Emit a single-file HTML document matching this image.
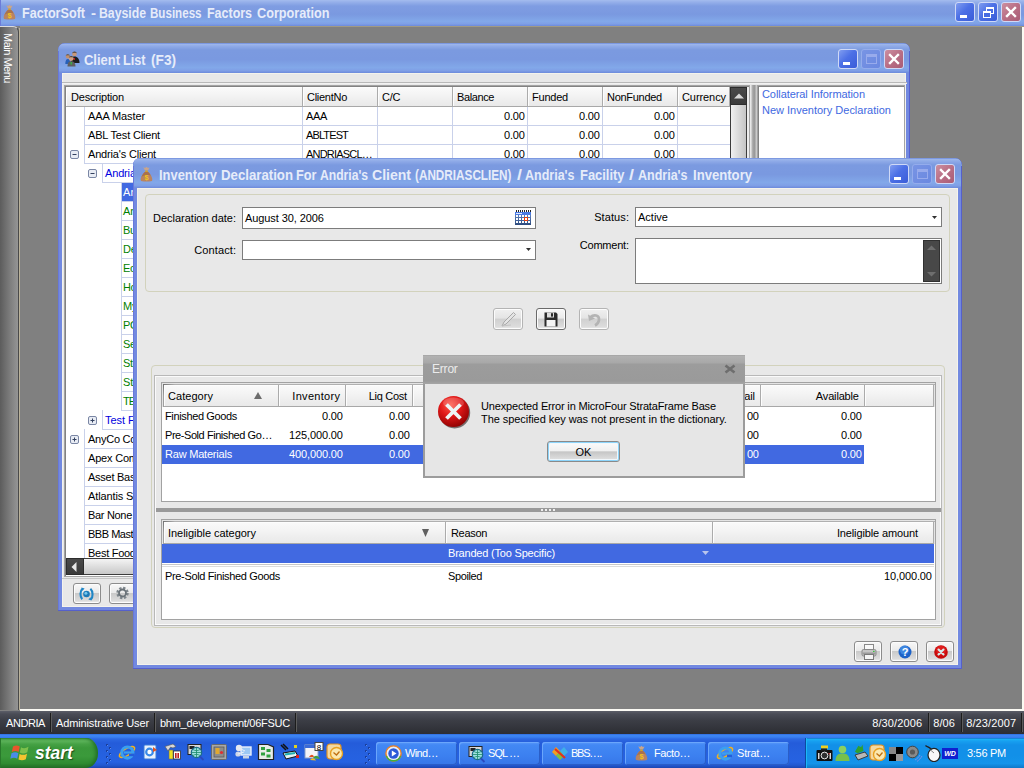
<!DOCTYPE html>
<html><head><meta charset="utf-8"><title>FactorSoft</title>
<style>
*{box-sizing:border-box;margin:0;padding:0}
html,body{width:1024px;height:768px;overflow:hidden;background:#808080;font-family:"Liberation Sans",sans-serif;font-size:11px;color:#000}
.a{position:absolute}
.t{position:absolute;white-space:nowrap;line-height:13px;height:13px;transform-origin:0 0}
.r{text-align:right}
.cap{background:linear-gradient(#5b7ad6 0,#9fb8ec 1px,#90abe8 3px,#7b9ae0 7px,#7a99e0 55%,#82a8e9 82%,#7f9fe6 92%,#6c8adb 100%)}
.capt{position:absolute;white-space:nowrap;font-weight:bold;font-size:14px;line-height:16px;color:#e6ecfa;transform-origin:0 0}
.win{position:absolute;border-radius:7px 7px 0 0;overflow:hidden}
.cb{position:absolute;width:20px;height:20px;border-radius:3px;border:1px solid #cfd9f7}
.cb.min,.cb.max{background:linear-gradient(135deg,#809df0 0,#4c70e6 45%,#3a5cd8 100%)}
.cb.dis{background:linear-gradient(135deg,#7894e4,#6a88e0);border-color:#94acec}
.cb.cls{background:linear-gradient(135deg,#cc8fa0 0,#b96f86 50%,#a95c76 100%)}
.hdr{position:absolute;background:linear-gradient(#fafafa 0,#f4f4f4 40%,#eeeeee 70%,#e9e9e9 100%);border-right:1px solid #ababab;border-bottom:1px solid #a8a8a8;box-shadow:inset 1px 1px 0 #fdfdfd}
.btn{position:absolute;border:1px solid #8c8c8c;border-radius:3px;background:linear-gradient(#f8f8f8 0,#eaeaea 46%,#cacaca 50%,#dcdcdc 88%,#f0f0f0 100%);box-shadow:inset 0 0 0 1px #fcfcfc}
.inp{position:absolute;background:#fff;border:1px solid #7c7c7c}
.gl{position:absolute;background:#c9d1ea}
.w{color:#fff}
</style></head><body>
<div class="a" style="left:0px;top:0px;width:1024px;height:26px;background:linear-gradient(#a4bcee 0,#96b0ea 2px,#7f9de2 6px,#7a99e0 55%,#82a8e9 82%,#7f9fe6 92%,#6c8adb 100%);box-shadow:inset 1px 0 0 #6c7cd8"></div>
<svg class="a" style="left:3px;top:4px" width="13" height="16" viewBox="0 0 14 16" preserveAspectRatio="none"><path d="M3.5 1.2L5.5 2L7 0.8L8.5 2L10.3 1.4L8.6 4.6L5.4 4.6Z" fill="#c9a58c"/><rect x="5.6" y="4.5" width="2.8" height="1.6" fill="#d8a020"/><path d="M5.2 6C2.5 8 0.3 12 0.8 14.2C1 15.3 3 15.6 7 15.6C11 15.6 13 15.3 13.2 14.2C13.7 12 11.5 8 8.8 6Z" fill="#b98462"/><path d="M5.2 6C3.8 7 2.4 9 1.6 11C4 9 9 8.5 11.5 9.5C10.8 8 9.8 6.8 8.8 6Z" fill="#a8714f"/><text x="7" y="14" font-size="8" font-weight="bold" text-anchor="middle" fill="#f2c21a" font-family="Liberation Sans">$</text></svg>
<div class="capt" style="left:22px;top:5px;transform:scaleX(0.9004)">FactorSoft</div><div class="capt" style="left:90.5px;top:5px;transform:scaleX(1.0738)">-</div><div class="capt" style="left:99px;top:5px;transform:scaleX(0.8757)">Bayside</div><div class="capt" style="left:150px;top:5px;transform:scaleX(0.8277)">Business</div><div class="capt" style="left:207px;top:5px;transform:scaleX(0.8903)">Factors</div><div class="capt" style="left:257px;top:5px;transform:scaleX(0.9054)">Corporation</div>
<div class="cb min" style="left:955px;top:2px;width:20px;height:20px;"><svg class="a" style="left:0;top:0" width="19" height="19"><rect x="4" y="12" width="7" height="3" fill="#fff"/></svg></div>
<div class="cb max" style="left:978px;top:2px;width:20px;height:20px;"><svg class="a" style="left:0;top:0" width="19" height="19"><rect x="7.5" y="4.5" width="7" height="6" fill="none" stroke="#fff" stroke-width="1"/><rect x="7" y="4" width="8" height="2" fill="#fff"/><rect x="4.5" y="8.5" width="7" height="6" fill="#456ae2" stroke="#fff" stroke-width="1"/><rect x="4" y="8" width="8" height="2" fill="#fff"/></svg></div>
<div class="cb cls" style="left:1001px;top:2px;width:20px;height:20px;"><svg class="a" style="left:0;top:0" width="19" height="19"><path d="M5 5L13 13M13 5L5 13" stroke="#fff" stroke-width="2.400" stroke-linecap="square"/></svg></div>
<div class="a" style="left:0px;top:26px;width:19px;height:684px;background:linear-gradient(90deg,#5c5c5c 0,#7a7a7a 50%,#959595 100%);border-top:1px solid #dcdcdc;border-right:1px solid #4a4a4a;border-radius:0 6px 0 0"></div>
<div class="a" style="left:19px;top:28px;width:1px;height:682px;background:#bab29a"></div>
<div class="a" style="left:20px;top:26px;width:1004px;height:1px;background:#a09a84"></div>
<div class="a" style="left:1022px;top:27px;width:2px;height:683px;background:#fbfaf2"></div>
<div class="a" style="left:20px;top:709px;width:1004px;height:2px;background:#fbfaf4"></div>
<div class="t w" id="mm" style="left:14px;top:33px;transform:rotate(90deg);font-size:11px;letter-spacing:-0.5px">Main Menu</div>
<div class="win" style="left:58px;top:43px;width:852px;height:568px;background:#7289e0;box-shadow:inset -1px -1px 0 #5560cc,inset 1px 0 0 #6878da">
<div class="a cap" style="left:0;top:0;width:852px;height:30px;border-radius:7px 7px 0 0"></div>
<div class="a" style="left:0;top:8px;width:1px;height:22px;background:#6878da"></div>
<div class="a" style="left:851px;top:8px;width:1px;height:22px;background:#5560cc"></div>
<svg class="a" style="left:7px;top:8px" width="15" height="16" viewBox="0 0 15 16"><circle cx="9.5" cy="3" r="2.3" fill="#c89878"/><path d="M7.200 2.800A2.300 2.300 0 0 1 11.800 2.800L11 1.800L8 1.800Z" fill="#4a4038"/><path d="M6 11C6 7 7.5 5.5 9.5 5.5C12.5 5.5 14.5 8 14.5 12L6 12Z" fill="#1c1c1c"/><rect x="8.6" y="7" width="1.2" height="2" fill="#e02020"/><circle cx="2.8" cy="5.5" r="2.1" fill="#c09070"/><path d="M0.700 5.300A2.100 2.100 0 0 1 4.900 5.300L4.200 4.300L1.400 4.300Z" fill="#50483c"/><path d="M0.3 13C0.3 9.5 1.3 8 2.8 8C4.5 8 5.5 9.5 5.5 13Z" fill="#2860b8"/><circle cx="6.2" cy="7.5" r="2.4" fill="#d0a080"/><path d="M3.800 7.300A2.400 2.400 0 0 1 8.600 7.300L7.800 6.200L4.600 6.200Z" fill="#504438"/><path d="M2.5 15.5C2.5 11.5 4 10.2 6.2 10.2C8.8 10.2 10.5 11.8 10.5 15.5Z" fill="#606060"/><rect x="5.6" y="11" width="1.2" height="2.6" fill="#30c040"/></svg>
<div class="capt" style="left:25.5px;top:9px;transform:scaleX(0.9260)">Client</div><div class="capt" style="left:65px;top:9px;transform:scaleX(0.9045)">List</div><div class="capt" style="left:92.5px;top:9px;transform:scaleX(0.9750)">(F3)</div>
<div class="cb min" style="left:780px;top:6px"><svg class="a" style="left:0;top:0" width="19" height="19"><rect x="4" y="12" width="7" height="3" fill="#fff"/></svg></div>
<div class="cb dis" style="left:803px;top:6px"><svg class="a" style="left:0;top:0" width="19" height="19"><rect x="4.5" y="4.5" width="10" height="9" fill="none" stroke="#98abec" stroke-width="1"/><rect x="4" y="4" width="11" height="3" fill="#98abec"/></svg></div>
<div class="cb cls" style="left:826px;top:6px"><svg class="a" style="left:0;top:0" width="19" height="19"><path d="M5 5L13 13M13 5L5 13" stroke="#fff" stroke-width="2.400" stroke-linecap="square"/></svg></div>
<div class="a" style="left:4px;top:30px;width:844px;height:534px;background:#e8e8e8;box-shadow:inset 1px 1px 0 #f4f3ec,inset -1px -1px 0 #f4f3ec"></div>
</div>
<div class="a" style="left:62px;top:82px;width:845px;height:1px;background:#b8b8b8"></div>
<div class="a" style="left:62px;top:83px;width:845px;height:1px;background:#f2f2f2"></div>
<div class="a" style="left:64px;top:85px;width:686px;height:492px;background:#fff;border:1px solid #a4a4a4;box-shadow:inset 1px 1px 0 #828282"></div>
<div class="hdr" style="left:66px;top:87px;width:237px;height:20px;"></div>
<div class="t " style="left:71px;top:91px;;letter-spacing:-0.185px">Description</div>
<div class="hdr" style="left:303px;top:87px;width:75px;height:20px;"></div>
<div class="t " style="left:307px;top:91px;;letter-spacing:-0.273px">ClientNo</div>
<div class="hdr" style="left:378px;top:87px;width:75px;height:20px;"></div>
<div class="t " style="left:382px;top:91px;;letter-spacing:-0.312px">C/C</div>
<div class="hdr" style="left:453px;top:87px;width:75px;height:20px;"></div>
<div class="t " style="left:457px;top:91px;;letter-spacing:-0.397px">Balance</div>
<div class="hdr" style="left:528px;top:87px;width:75px;height:20px;"></div>
<div class="t " style="left:532px;top:91px;;letter-spacing:-0.224px">Funded</div>
<div class="hdr" style="left:603px;top:87px;width:75px;height:20px;"></div>
<div class="t " style="left:607px;top:91px;;letter-spacing:-0.281px">NonFunded</div>
<div class="hdr" style="left:678px;top:87px;width:52px;height:20px;"></div>
<div class="t " style="left:682px;top:91px;;letter-spacing:-0.078px">Currency</div>
<div class="gl" style="left:84px;top:107px;width:1px;height:19px;"></div>
<div class="gl" style="left:84px;top:125px;width:646px;height:1px;"></div>
<div class="t " style="left:88px;top:110px;color:#000;letter-spacing:-0.111px">AAA Master</div>
<div class="t " style="left:306px;top:110px;;letter-spacing:-0.344px">AAA</div>
<div class="t  r" style="left:324.891px;width:200px;top:110px;;letter-spacing:-0.109px">0.00</div>
<div class="t  r" style="left:399.891px;width:200px;top:110px;;letter-spacing:-0.109px">0.00</div>
<div class="t  r" style="left:474.891px;width:200px;top:110px;;letter-spacing:-0.109px">0.00</div>
<div class="gl" style="left:302px;top:107px;width:1px;height:19px;"></div>
<div class="gl" style="left:377px;top:107px;width:1px;height:19px;"></div>
<div class="gl" style="left:452px;top:107px;width:1px;height:19px;"></div>
<div class="gl" style="left:527px;top:107px;width:1px;height:19px;"></div>
<div class="gl" style="left:602px;top:107px;width:1px;height:19px;"></div>
<div class="gl" style="left:677px;top:107px;width:1px;height:19px;"></div>
<div class="gl" style="left:84px;top:125px;width:1px;height:20px;"></div>
<div class="gl" style="left:84px;top:144px;width:646px;height:1px;"></div>
<div class="t " style="left:88px;top:129px;color:#000;letter-spacing:-0.176px">ABL Test Client</div>
<div class="t " style="left:306px;top:129px;;letter-spacing:-0.875px">ABLTEST</div>
<div class="t  r" style="left:324.891px;width:200px;top:129px;;letter-spacing:-0.109px">0.00</div>
<div class="t  r" style="left:399.891px;width:200px;top:129px;;letter-spacing:-0.109px">0.00</div>
<div class="t  r" style="left:474.891px;width:200px;top:129px;;letter-spacing:-0.109px">0.00</div>
<div class="gl" style="left:302px;top:126px;width:1px;height:19px;"></div>
<div class="gl" style="left:377px;top:126px;width:1px;height:19px;"></div>
<div class="gl" style="left:452px;top:126px;width:1px;height:19px;"></div>
<div class="gl" style="left:527px;top:126px;width:1px;height:19px;"></div>
<div class="gl" style="left:602px;top:126px;width:1px;height:19px;"></div>
<div class="gl" style="left:677px;top:126px;width:1px;height:19px;"></div>
<div class="gl" style="left:84px;top:144px;width:1px;height:20px;"></div>
<div class="gl" style="left:84px;top:163px;width:646px;height:1px;"></div>
<div class="t " style="left:88px;top:148px;color:#000;letter-spacing:-0.173px">Andria's Client</div>
<svg class="a" style="left:70px;top:150px" width="9" height="9"><rect x="0.5" y="0.5" width="8" height="8" rx="1.5" fill="#e8ecf4" stroke="#7a86a4"/><path d="M2.5 4.5H6.5" stroke="#33415f" stroke-width="1"/></svg>
<div class="t " style="left:306px;top:148px;;letter-spacing:-0.797px">ANDRIASCL…</div>
<div class="t  r" style="left:324.891px;width:200px;top:148px;;letter-spacing:-0.109px">0.00</div>
<div class="t  r" style="left:399.891px;width:200px;top:148px;;letter-spacing:-0.109px">0.00</div>
<div class="t  r" style="left:474.891px;width:200px;top:148px;;letter-spacing:-0.109px">0.00</div>
<div class="gl" style="left:302px;top:145px;width:1px;height:19px;"></div>
<div class="gl" style="left:377px;top:145px;width:1px;height:19px;"></div>
<div class="gl" style="left:452px;top:145px;width:1px;height:19px;"></div>
<div class="gl" style="left:527px;top:145px;width:1px;height:19px;"></div>
<div class="gl" style="left:602px;top:145px;width:1px;height:19px;"></div>
<div class="gl" style="left:677px;top:145px;width:1px;height:19px;"></div>
<div class="gl" style="left:102px;top:163px;width:1px;height:20px;"></div>
<div class="gl" style="left:102px;top:182px;width:628px;height:1px;"></div>
<div class="t " style="left:105px;top:167px;color:#0000e0;letter-spacing:-0.158px">Andria's Facility</div>
<svg class="a" style="left:88px;top:169px" width="9" height="9"><rect x="0.5" y="0.5" width="8" height="8" rx="1.5" fill="#e8ecf4" stroke="#7a86a4"/><path d="M2.5 4.5H6.5" stroke="#33415f" stroke-width="1"/></svg>
<div class="gl" style="left:121px;top:182px;width:1px;height:20px;"></div>
<div class="gl" style="left:121px;top:201px;width:609px;height:1px;"></div>
<div class="a" style="left:122px;top:183px;width:160px;height:18px;background:#4169e1"></div>
<div class="t " style="left:123px;top:186px;color:#fff;letter-spacing:0.069px">Andria's Inventory</div>
<div class="gl" style="left:121px;top:201px;width:1px;height:20px;"></div>
<div class="gl" style="left:121px;top:220px;width:609px;height:1px;"></div>
<div class="t " style="left:123px;top:205px;color:#008000;letter-spacing:-0.195px">Andria's AR</div>
<div class="gl" style="left:121px;top:220px;width:1px;height:20px;"></div>
<div class="gl" style="left:121px;top:239px;width:609px;height:1px;"></div>
<div class="t " style="left:123px;top:224px;color:#008000;letter-spacing:-0.395px">Building</div>
<div class="gl" style="left:121px;top:239px;width:1px;height:20px;"></div>
<div class="gl" style="left:121px;top:258px;width:609px;height:1px;"></div>
<div class="t " style="left:123px;top:243px;color:#008000;letter-spacing:-0.075px">Delivery trucks</div>
<div class="gl" style="left:121px;top:258px;width:1px;height:20px;"></div>
<div class="gl" style="left:121px;top:277px;width:609px;height:1px;"></div>
<div class="t " style="left:123px;top:262px;color:#008000;letter-spacing:-0.333px">Ecuipment</div>
<div class="gl" style="left:121px;top:277px;width:1px;height:20px;"></div>
<div class="gl" style="left:121px;top:296px;width:609px;height:1px;"></div>
<div class="t " style="left:123px;top:281px;color:#008000;letter-spacing:-0.362px">House</div>
<div class="gl" style="left:121px;top:296px;width:1px;height:20px;"></div>
<div class="gl" style="left:121px;top:315px;width:609px;height:1px;"></div>
<div class="t " style="left:123px;top:300px;color:#008000;letter-spacing:-0.041px">My stuff</div>
<div class="gl" style="left:121px;top:315px;width:1px;height:20px;"></div>
<div class="gl" style="left:121px;top:334px;width:609px;height:1px;"></div>
<div class="t " style="left:123px;top:319px;color:#008000;letter-spacing:-0.231px">PO collateral</div>
<div class="gl" style="left:121px;top:334px;width:1px;height:20px;"></div>
<div class="gl" style="left:121px;top:353px;width:609px;height:1px;"></div>
<div class="t " style="left:123px;top:338px;color:#008000;letter-spacing:-0.231px">Securities</div>
<div class="gl" style="left:121px;top:353px;width:1px;height:20px;"></div>
<div class="gl" style="left:121px;top:372px;width:609px;height:1px;"></div>
<div class="t " style="left:123px;top:357px;color:#008000;letter-spacing:-0.306px">Stock</div>
<div class="gl" style="left:121px;top:372px;width:1px;height:20px;"></div>
<div class="gl" style="left:121px;top:391px;width:609px;height:1px;"></div>
<div class="t " style="left:123px;top:376px;color:#008000;letter-spacing:-0.091px">Stuff</div>
<div class="gl" style="left:121px;top:391px;width:1px;height:20px;"></div>
<div class="gl" style="left:121px;top:410px;width:609px;height:1px;"></div>
<div class="t " style="left:123px;top:395px;color:#008000;letter-spacing:-1.031px">TEST</div>
<div class="gl" style="left:102px;top:410px;width:1px;height:20px;"></div>
<div class="gl" style="left:102px;top:429px;width:628px;height:1px;"></div>
<div class="t " style="left:105px;top:414px;color:#0000e0;letter-spacing:-0.036px">Test Facility</div>
<svg class="a" style="left:88px;top:416px" width="9" height="9"><rect x="0.5" y="0.5" width="8" height="8" rx="1.5" fill="#e8ecf4" stroke="#7a86a4"/><path d="M2.5 4.5H6.5M4.5 2.5V6.5" stroke="#33415f" stroke-width="1"/></svg>
<div class="gl" style="left:84px;top:429px;width:1px;height:20px;"></div>
<div class="gl" style="left:84px;top:448px;width:646px;height:1px;"></div>
<div class="t " style="left:88px;top:433px;color:#000;letter-spacing:-0.245px">AnyCo Company</div>
<svg class="a" style="left:70px;top:435px" width="9" height="9"><rect x="0.5" y="0.5" width="8" height="8" rx="1.5" fill="#e8ecf4" stroke="#7a86a4"/><path d="M2.5 4.5H6.5M4.5 2.5V6.5" stroke="#33415f" stroke-width="1"/></svg>
<div class="gl" style="left:84px;top:448px;width:1px;height:20px;"></div>
<div class="gl" style="left:84px;top:467px;width:646px;height:1px;"></div>
<div class="t " style="left:88px;top:452px;color:#000;letter-spacing:-0.188px">Apex Company</div>
<div class="gl" style="left:84px;top:467px;width:1px;height:20px;"></div>
<div class="gl" style="left:84px;top:486px;width:646px;height:1px;"></div>
<div class="t " style="left:88px;top:471px;color:#000;letter-spacing:-0.256px">Asset Based</div>
<div class="gl" style="left:84px;top:486px;width:1px;height:20px;"></div>
<div class="gl" style="left:84px;top:505px;width:646px;height:1px;"></div>
<div class="t " style="left:88px;top:490px;color:#000;letter-spacing:-0.121px">Atlantis Supply</div>
<div class="gl" style="left:84px;top:505px;width:1px;height:20px;"></div>
<div class="gl" style="left:84px;top:524px;width:646px;height:1px;"></div>
<div class="t " style="left:88px;top:509px;color:#000;letter-spacing:-0.312px">Bar None</div>
<div class="gl" style="left:84px;top:524px;width:1px;height:20px;"></div>
<div class="gl" style="left:84px;top:543px;width:646px;height:1px;"></div>
<div class="t " style="left:88px;top:528px;color:#000;letter-spacing:-0.472px">BBB Master</div>
<div class="gl" style="left:84px;top:543px;width:1px;height:20px;"></div>
<div class="t " style="left:88px;top:547px;color:#000;letter-spacing:-0.269px">Best Foods</div>
<div class="a" style="left:747px;top:87px;width:2px;height:489px;background:#ececec"></div>
<div class="a" style="left:730px;top:87px;width:17px;height:471px;background:linear-gradient(90deg,#f0f0f0 0,#dcdcdc 45%,#c4c4c4 100%);border:1px solid #3c3c3c"></div>
<div class="a" style="left:730px;top:87px;width:17px;height:18px;background:linear-gradient(#4a4a4a,#3a3a3a);border:1px solid #2c2c2c"><svg class="a" style="left:2.500px;top:5px" width="10" height="6"><path d="M0 5.5L5 0.5L10 5.5Z" fill="#d8d8d8"/></svg></div>
<div class="a" style="left:66px;top:558px;width:664px;height:17px;background:linear-gradient(#f4f4f4 0,#e0e0e0 45%,#c8c8c8 100%);border:1px solid #3c3c3c"></div>
<div class="a" style="left:66px;top:558px;width:18px;height:17px;background:linear-gradient(#4a4a4a,#3a3a3a);border:1px solid #2c2c2c"><svg class="a" style="left:3.500px;top:3px" width="6" height="10"><path d="M5.500 0L0.500 5L5.500 10Z" fill="#e8e8e8"/></svg></div>
<div class="a" style="left:730px;top:558px;width:19px;height:18px;background:#e8e8e8"></div>
<div class="a" style="left:751px;top:85px;width:6px;height:492px;background:linear-gradient(90deg,#e0e0e0 0,#a4a4a4 30%,#9a9a9a 60%,#d8d8d8 100%)"></div>
<div class="a" style="left:757px;top:85px;width:148px;height:492px;background:#fff;border:1px solid #a4a4a4;box-shadow:inset 1px 1px 0 #828282"></div>
<div class="t " style="left:762px;top:88px;color:#4169e1;letter-spacing:-0.072px">Collateral Information</div>
<div class="t " style="left:762px;top:104px;color:#4169e1;letter-spacing:-0.003px">New Inventory Declaration</div>
<div class="a" style="left:62px;top:578px;width:845px;height:1px;background:#c6c6c6"></div>
<div class="btn" style="left:73px;top:583px;width:28px;height:21px;"><svg class="a" style="left:4px;top:1.500px" width="17" height="16" viewBox="0 0 17 16"><circle cx="8.500" cy="8" r="3.300" fill="#1b7ab8"/><circle cx="7.900" cy="7.300" r="1.500" fill="#74c6ec"/><path d="M4.600 2.600C1.800 5 1.800 10.600 4.200 13.200" fill="none" stroke="#1f86c6" stroke-width="2.100"/><path d="M12.400 2.800C15.200 5.400 15.200 11 12.800 13.400" fill="none" stroke="#1f86c6" stroke-width="2.100"/><path d="M3.400 1.600L6.600 2.400L4.600 4.800Z" fill="#1f86c6"/><path d="M13.600 14.400L10.400 13.600L12.400 11.200Z" fill="#1f86c6"/></svg></div>
<div class="btn" style="left:109px;top:583px;width:28px;height:21px;"><svg class="a" style="left:4px;top:1px" width="17" height="16" viewBox="0 0 17 16"><circle cx="8.500" cy="8" r="4.800" fill="none" stroke="#7e868c" stroke-width="2.800" stroke-dasharray="2.200 1.570"/><circle cx="8.500" cy="8" r="3.500" fill="none" stroke="#6a7278" stroke-width="1.800"/></svg></div>
<div class="win" style="left:133px;top:158px;width:829px;height:511px;background:#7289e0;box-shadow:inset -1px -1px 0 #5560cc,inset 1px 0 0 #6878da">
<div class="a cap" style="left:0;top:0;width:829px;height:30px;border-radius:7px 7px 0 0"></div>
<div class="a" style="left:0;top:8px;width:1px;height:22px;background:#6878da"></div>
<div class="a" style="left:828px;top:8px;width:1px;height:22px;background:#5560cc"></div>
<svg class="a" style="left:6.5px;top:7.5px" width="13" height="16" viewBox="0 0 14 16" preserveAspectRatio="none"><path d="M3.5 1.2L5.5 2L7 0.8L8.5 2L10.3 1.4L8.6 4.6L5.4 4.6Z" fill="#c9a58c"/><rect x="5.6" y="4.5" width="2.8" height="1.6" fill="#d8a020"/><path d="M5.2 6C2.5 8 0.3 12 0.8 14.2C1 15.3 3 15.6 7 15.6C11 15.6 13 15.3 13.2 14.2C13.7 12 11.5 8 8.8 6Z" fill="#b98462"/><path d="M5.2 6C3.8 7 2.4 9 1.6 11C4 9 9 8.5 11.5 9.5C10.8 8 9.8 6.8 8.8 6Z" fill="#a8714f"/><text x="7" y="14" font-size="8" font-weight="bold" text-anchor="middle" fill="#f2c21a" font-family="Liberation Sans">$</text></svg>
<div class="capt" style="left:26px;top:9px;transform:scaleX(0.9209)">Inventory</div><div class="capt" style="left:87.5px;top:9px;transform:scaleX(0.9446)">Declaration</div><div class="capt" style="left:163px;top:9px;transform:scaleX(0.9092)">For</div><div class="capt" style="left:187px;top:9px;transform:scaleX(0.8658)">Andria's</div><div class="capt" style="left:239px;top:9px;transform:scaleX(1.0032)">Client</div><div class="capt" style="left:282px;top:9px;transform:scaleX(0.8384)">(ANDRIASCLIEN)</div><div class="capt" style="left:384px;top:9px;transform:scaleX(1.2851)">/</div><div class="capt" style="left:392px;top:9px;transform:scaleX(0.8929)">Andria's</div><div class="capt" style="left:446.5px;top:9px;transform:scaleX(0.9229)">Facility</div><div class="capt" style="left:496px;top:9px;transform:scaleX(1.2851)">/</div><div class="capt" style="left:505px;top:9px;transform:scaleX(0.8929)">Andria's</div><div class="capt" style="left:559.5px;top:9px;transform:scaleX(0.9367)">Inventory</div>
<div class="cb min" style="left:756px;top:6px"><svg class="a" style="left:0;top:0" width="19" height="19"><rect x="4" y="12" width="7" height="3" fill="#fff"/></svg></div>
<div class="cb dis" style="left:779px;top:6px"><svg class="a" style="left:0;top:0" width="19" height="19"><rect x="4.5" y="4.5" width="10" height="9" fill="none" stroke="#98abec" stroke-width="1"/><rect x="4" y="4" width="11" height="3" fill="#98abec"/></svg></div>
<div class="cb cls" style="left:802px;top:6px"><svg class="a" style="left:0;top:0" width="19" height="19"><path d="M5 5L13 13M13 5L5 13" stroke="#fff" stroke-width="2.400" stroke-linecap="square"/></svg></div>
<div class="a" style="left:4px;top:30px;width:821px;height:477px;background:#e8e8e8;box-shadow:inset 1px 1px 0 #f4f3ec,inset -1px -1px 0 #f4f3ec"></div>
</div>
<div class="a" style="left:145px;top:194px;width:805px;height:98px;border:1px solid #d2d2bc;border-radius:4px"></div>
<div class="t  r" style="left:35.9871px;width:200px;top:212px;;letter-spacing:-0.013px">Declaration date:</div>
<div class="inp" style="left:242px;top:207px;width:294px;height:22px;"></div>
<div class="t " style="left:245px;top:212px;;letter-spacing:-0.081px">August 30, 2006</div>
<svg class="a" style="left:515px;top:210px" width="16" height="15" viewBox="0 0 16 15" shape-rendering="crispEdges"><defs><linearGradient id="cg" x1="0" y1="0" x2="0" y2="1"><stop offset="0" stop-color="#6b8fd0"/><stop offset="1" stop-color="#2c4a7c"/></linearGradient></defs><rect x="1" y="0" width="1" height="2" fill="#222"/><rect x="3" y="0" width="1" height="2" fill="#222"/><rect x="5" y="0" width="1" height="2" fill="#222"/><rect x="7" y="0" width="1" height="2" fill="#222"/><rect x="9" y="0" width="1" height="2" fill="#222"/><rect x="11" y="0" width="1" height="2" fill="#222"/><rect x="13" y="0" width="1" height="2" fill="#222"/><rect x="15" y="0" width="1" height="2" fill="#222"/><rect x="0" y="2" width="16" height="13" fill="url(#cg)"/><rect x="0" y="2" width="16" height="2.600" fill="#4b7be4"/><rect x="1" y="3" width="6" height="1" fill="#dfe8fb"/><rect x="1" y="5" width="2" height="2" fill="#fff"/><rect x="4" y="5" width="2" height="2" fill="#fff"/><rect x="7" y="5" width="2" height="2" fill="#fff"/><rect x="10" y="5" width="2" height="2" fill="#fff"/><rect x="13" y="5" width="2" height="2" fill="#fff"/><rect x="1" y="8" width="2" height="2" fill="#fff"/><rect x="4" y="8" width="2" height="2" fill="#fff"/><rect x="7" y="8" width="2" height="2" fill="#fff"/><rect x="10" y="8" width="2" height="2" fill="#fff"/><rect x="13" y="8" width="2" height="2" fill="#fff"/><rect x="1" y="11" width="2" height="2" fill="#fff"/><rect x="4" y="11" width="2" height="2" fill="#fff"/><rect x="7" y="11" width="2" height="2" fill="#fff"/><rect x="10" y="11" width="2" height="2" fill="#fff"/><rect x="13" y="11" width="2" height="2" fill="#fff"/><rect x="9" y="7" width="4" height="4" fill="#e8400c"/><rect x="10" y="8" width="2" height="2" fill="#fff"/></svg>
<div class="t  r" style="left:36.125px;width:200px;top:244px;;letter-spacing:0.125px">Contact:</div>
<div class="inp" style="left:242px;top:240px;width:294px;height:20px;"></div>
<svg class="a" style="left:526px;top:248px" width="5" height="3"><path d="M0 0H5L2.500 3Z" fill="#303030"/></svg>
<div class="t  r" style="left:429.103px;width:200px;top:211px;;letter-spacing:0.103px">Status:</div>
<div class="inp" style="left:635px;top:207px;width:307px;height:20px;"></div>
<div class="t " style="left:638px;top:211px;;letter-spacing:0.005px">Active</div>
<svg class="a" style="left:932px;top:216px" width="5" height="3"><path d="M0 0H5L2.500 3Z" fill="#303030"/></svg>
<div class="t  r" style="left:428.781px;width:200px;top:239px;;letter-spacing:-0.219px">Comment:</div>
<div class="inp" style="left:635px;top:238px;width:307px;height:46px;"></div>
<div class="a" style="left:923px;top:240px;width:17px;height:42px;background:#484848;border:1px solid #303030"><svg class="a" style="left:3px;top:4px" width="9" height="32"><path d="M0 5L4.5 0.5L9 5Z" fill="#6e6e6e"/><path d="M0 27L4.5 31.5L9 27Z" fill="#6e6e6e"/></svg></div>
<div class="btn" style="left:493px;top:308px;width:30px;height:22px;border-color:#b4b4b4;background:linear-gradient(#f0f0f0 0,#e4e4e4 46%,#d0d0d0 50%,#dcdcdc 88%,#ececec 100%)"><svg class="a" style="left:5px;top:2px" width="20" height="17" viewBox="0 0 20 17"><path d="M3 15L5 11L14.5 1.5L16.5 3.5L7 13Z" fill="#e4e4e4" stroke="#a8a8a8" stroke-width="1"/><path d="M3 15L12 14" stroke="#c4c4c4"/></svg></div>
<div class="btn" style="left:536px;top:308px;width:30px;height:22px;border-color:#6a6a6a"><svg class="a" style="left:7px;top:3px" width="14" height="15" viewBox="0 0 14 15"><path d="M0.5 0.5H12L13.5 2V14.5H0.5Z" fill="#2a2a2a"/><rect x="3" y="0.5" width="7" height="5" fill="#dcdcdc"/><rect x="7" y="1.2" width="2" height="3.4" fill="#2a2a2a"/><rect x="2.5" y="8" width="9" height="6.5" fill="#f4f4f4"/></svg></div>
<div class="btn" style="left:579px;top:308px;width:30px;height:22px;border-color:#b4b4b4;background:linear-gradient(#f0f0f0 0,#e4e4e4 46%,#d0d0d0 50%,#dcdcdc 88%,#ececec 100%)"><svg class="a" style="left:7px;top:3px" width="16" height="15" viewBox="0 0 16 15"><path d="M3 5.5C7 2 12.5 3 12 8C11.7 10.5 10 12.5 8 13.5" fill="none" stroke="#b4b4b4" stroke-width="2.6"/><path d="M1 2.5L2 9L8 6.5Z" fill="#b4b4b4"/></svg></div>
<div class="a" style="left:151px;top:365px;width:794px;height:263px;border:1px solid #d2d2bc;border-radius:4px"></div>
<div class="a" style="left:154px;top:375px;width:788px;height:251px;border:1px solid #b8b8b8;box-shadow:inset 1px 1px 0 #fafafa,inset -1px -1px 0 #fafafa;background:#e8e8e8"></div>
<div class="a" style="left:161px;top:382px;width:775px;height:120px;background:#fff;border:1px solid #a2a2a2"></div>
<div class="a" style="left:162px;top:383px;width:773px;height:24px;background:#e4e4e4"></div>
<div class="a" style="left:163px;top:384px;width:772px;height:1px;background:linear-gradient(90deg,#707070 0,#b0b0b0 12px)"></div>
<div class="a" style="left:163px;top:384px;width:1px;height:23px;background:linear-gradient(#707070 0,#a0a0a0 12px)"></div>
<div class="hdr" style="left:164px;top:385px;width:115px;height:22px;"></div>
<div class="t " style="left:168px;top:390px;;letter-spacing:0.043px">Category</div>
<div class="hdr" style="left:279px;top:385px;width:67px;height:22px;"></div>
<div class="t  r" style="left:140.302px;width:200px;top:390px;;letter-spacing:0.302px">Inventory</div>
<div class="hdr" style="left:346px;top:385px;width:67px;height:22px;"></div>
<div class="t  r" style="left:206.703px;width:200px;top:390px;;letter-spacing:-0.297px">Liq Cost</div>
<div class="hdr" style="left:413px;top:385px;width:67px;height:22px;"></div>
<div class="hdr" style="left:480px;top:385px;width:67px;height:22px;"></div>
<div class="hdr" style="left:547px;top:385px;width:67px;height:22px;"></div>
<div class="hdr" style="left:614px;top:385px;width:67px;height:22px;"></div>
<div class="hdr" style="left:681px;top:385px;width:80px;height:22px;"></div>
<div class="t  r" style="left:554.872px;width:200px;top:390px;;letter-spacing:-0.128px">Avail</div>
<div class="hdr" style="left:761px;top:385px;width:104px;height:22px;"></div>
<div class="t  r" style="left:658.839px;width:200px;top:390px;;letter-spacing:-0.161px">Available</div>
<div class="hdr" style="left:865px;top:385px;width:69px;height:22px;"></div>
<svg class="a" style="left:254px;top:391.500px" width="8" height="7"><path d="M0 7L4 0L8 7Z" fill="#6c6c6c"/></svg>
<div class="t " style="left:165px;top:410px;;letter-spacing:-0.364px">Finished Goods</div>
<div class="t  r" style="left:142.891px;width:200px;top:410px;;letter-spacing:-0.109px">0.00</div>
<div class="t  r" style="left:209.891px;width:200px;top:410px;;letter-spacing:-0.109px">0.00</div>
<div class="t  r" style="left:558.875px;width:200px;top:410px;;letter-spacing:-0.125px">00</div>
<div class="t  r" style="left:661.891px;width:200px;top:410px;;letter-spacing:-0.109px">0.00</div>
<div class="t " style="left:165px;top:429px;;letter-spacing:-0.439px">Pre-Sold Finished Go…</div>
<div class="t  r" style="left:142.887px;width:200px;top:429px;;letter-spacing:-0.113px">125,000.00</div>
<div class="t  r" style="left:209.891px;width:200px;top:429px;;letter-spacing:-0.109px">0.00</div>
<div class="t  r" style="left:558.875px;width:200px;top:429px;;letter-spacing:-0.125px">00</div>
<div class="t  r" style="left:661.891px;width:200px;top:429px;;letter-spacing:-0.109px">0.00</div>
<div class="a" style="left:162px;top:445px;width:702px;height:19px;background:#4169e1"></div>
<div class="t w" style="left:165px;top:448px;;letter-spacing:-0.207px">Raw Materials</div>
<div class="t w r" style="left:142.887px;width:200px;top:448px;;letter-spacing:-0.113px">400,000.00</div>
<div class="t w r" style="left:209.891px;width:200px;top:448px;;letter-spacing:-0.109px">0.00</div>
<div class="t w r" style="left:558.875px;width:200px;top:448px;;letter-spacing:-0.125px">00</div>
<div class="t w r" style="left:661.891px;width:200px;top:448px;;letter-spacing:-0.109px">0.00</div>
<div class="a" style="left:156px;top:508px;width:785px;height:4px;background:#9a9a9a"></div>
<div class="a" style="left:541px;top:509px;width:2px;height:2px;background:#f0f0f0"></div>
<div class="a" style="left:545px;top:509px;width:2px;height:2px;background:#f0f0f0"></div>
<div class="a" style="left:549px;top:509px;width:2px;height:2px;background:#f0f0f0"></div>
<div class="a" style="left:553px;top:509px;width:2px;height:2px;background:#f0f0f0"></div>
<div class="a" style="left:161px;top:519px;width:775px;height:101px;background:#fff;border:1px solid #a2a2a2"></div>
<div class="a" style="left:162px;top:520px;width:773px;height:24px;background:#e4e4e4"></div>
<div class="a" style="left:163px;top:521px;width:772px;height:1px;background:linear-gradient(90deg,#707070 0,#b0b0b0 12px)"></div>
<div class="a" style="left:163px;top:521px;width:1px;height:23px;background:linear-gradient(#707070 0,#a0a0a0 12px)"></div>
<div class="hdr" style="left:164px;top:522px;width:282px;height:22px;"></div>
<div class="hdr" style="left:446px;top:522px;width:267px;height:22px;"></div>
<div class="hdr" style="left:713px;top:522px;width:221px;height:22px;"></div>
<div class="t " style="left:168px;top:527px;;letter-spacing:-0.038px">Ineligible category</div>
<div class="t " style="left:451px;top:527px;;letter-spacing:-0.323px">Reason</div>
<div class="t  r" style="left:717.869px;width:200px;top:527px;;letter-spacing:-0.131px">Ineligible amount</div>
<svg class="a" style="left:422px;top:529px" width="7" height="8"><path d="M0 0L3.500 8L7 0Z" fill="#606060"/></svg>
<div class="a" style="left:162px;top:544px;width:772px;height:19px;background:#4169e1"></div>
<div class="t w" style="left:448px;top:547px;;letter-spacing:-0.197px">Branded (Too Specific)</div>
<svg class="a" style="left:702px;top:551px" width="7" height="4"><path d="M0 0H7L3.5 4Z" fill="#b8c4ec"/></svg>
<div class="a" style="left:162px;top:564px;width:772px;height:1px;background:#c8c8c8"></div>
<div class="a" style="left:162px;top:566px;width:772px;height:1px;background:#dcdcdc"></div>
<div class="t " style="left:165px;top:570px;;letter-spacing:-0.346px">Pre-Sold Finished Goods</div>
<div class="t " style="left:448px;top:570px;;letter-spacing:-0.388px">Spoiled</div>
<div class="t  r" style="left:731.889px;width:200px;top:570px;;letter-spacing:-0.111px">10,000.00</div>
<div class="btn" style="left:854px;top:641px;width:28px;height:21px;"><svg class="a" style="left:6px;top:2px" width="16" height="16" viewBox="0 0 16 16"><rect x="3.5" y="0.5" width="9" height="6" fill="#fafafa" stroke="#8a8a8a"/><rect x="1" y="5.500" width="14" height="6.500" rx="1.500" fill="#c4c4c4" stroke="#8a8a8a"/><rect x="1.500" y="8.500" width="13" height="2" fill="#9a9a9a"/><rect x="3.500" y="10.500" width="9" height="1.600" fill="#2a2a2a"/><rect x="3.5" y="10.5" width="9" height="5" fill="#f4f4f4" stroke="#7a7a7a"/><rect x="12" y="6.8" width="1.6" height="1.2" fill="#40c040"/></svg></div>
<div class="btn" style="left:890px;top:641px;width:28px;height:21px;"><svg class="a" style="left:6px;top:2px" width="16" height="16" viewBox="0 0 16 16"><circle cx="8" cy="8" r="6.500" fill="#1c62c8"/><circle cx="7.500" cy="6" r="4.600" fill="#4a94ea" opacity="0.700"/><text x="8" y="12" font-size="11" font-weight="bold" text-anchor="middle" fill="#fff" font-family="Liberation Sans">?</text></svg></div>
<div class="btn" style="left:926px;top:641px;width:28px;height:21px;"><svg class="a" style="left:6px;top:2px" width="16" height="16" viewBox="0 0 16 16"><circle cx="8" cy="8" r="6.800" fill="#c80c0c"/><circle cx="8" cy="6.500" r="4.800" fill="#ee2a2a" opacity="0.600"/><path d="M5.500 5.500L10.500 10.500M10.500 5.500L5.500 10.500" stroke="#d4ecec" stroke-width="2.100" stroke-linecap="round"/></svg></div>
<div class="a" style="left:423px;top:355px;width:322px;height:123px;background:#e6e6e6;border:2px solid #9c9c9c"></div>
<div class="a" style="left:423px;top:355px;width:322px;height:29px;background:linear-gradient(#9e9e9e 0,#b2b2b2 1px,#a8a8a8 8px,#9c9c9c 9px,#9a9a9a 26px,#a6a6a6 100%)"></div>
<div class="t" id="errt" style="left:432px;top:362px;font-size:12px;line-height:15px;height:15px;letter-spacing:-0.200px;color:#ebebeb">Error</div>
<svg class="a" style="left:724px;top:364px" width="12" height="10"><path d="M1.5 1.5L10.5 8.5M10.5 1.5L1.5 8.5" stroke="#6e6e6e" stroke-width="2.7"/></svg>
<svg class="a" style="left:436px;top:394px" width="36" height="36" viewBox="0 0 36 36"><defs><radialGradient id="rg" cx="0.4" cy="0.3" r="0.75"><stop offset="0" stop-color="#ff5a4a"/><stop offset="0.45" stop-color="#e01818"/><stop offset="1" stop-color="#8c0000"/></radialGradient></defs><circle cx="18.6" cy="18.8" r="15.6" fill="#1a0a0a" opacity="0.55"/><circle cx="17.5" cy="17.5" r="15.5" fill="url(#rg)"/><ellipse cx="17.5" cy="9" rx="10.5" ry="5.5" fill="#fff" opacity="0.18"/><path d="M10.500 10.500L24.500 24.500M24.500 10.500L10.500 24.500" stroke="#eef6f6" stroke-width="3.800" stroke-linecap="butt"/></svg>
<div class="t " id="e1" style="left:481px;top:400px;;letter-spacing:-0.170px">Unexpected Error in MicroFour StrataFrame Base</div>
<div class="t " id="e2" style="left:481px;top:413px;;letter-spacing:-0.055px">The specified key was not present in the dictionary.</div>
<div class="a" style="left:547px;top:441px;width:73px;height:21px;border:1px solid #8a8a8a;border-radius:3px;background:linear-gradient(#fcfcfc 0,#f0f0f0 46%,#c6c6c6 52%,#dcdcdc 88%,#f0f0f0 100%);box-shadow:inset 0 0 0 1px #8cd4fa,inset 0 0 0 2px #f2f8fc"></div>
<div class="t " style="left:547px;top:446px;width:73px;text-align:center">OK</div>
<div class="a" style="left:0px;top:711px;width:1024px;height:23px;background:linear-gradient(#5c5e68 0,#4a4c56 3px,#3c3e46 40%,#2c2d33 100%)"></div>
<div class="t w" style="left:6px;top:717px;;letter-spacing:-0.427px">ANDRIA</div>
<div class="a" style="left:50px;top:713px;width:1px;height:19px;background:#1c1c1c"></div>
<div class="a" style="left:51px;top:713px;width:1px;height:19px;background:#5c5c5c"></div>
<div class="t w" style="left:56px;top:717px;;letter-spacing:-0.125px">Administrative User</div>
<div class="a" style="left:154px;top:713px;width:1px;height:19px;background:#1c1c1c"></div>
<div class="a" style="left:155px;top:713px;width:1px;height:19px;background:#5c5c5c"></div>
<div class="t w" style="left:160px;top:717px;;letter-spacing:-0.264px">bhm_development/06FSUC</div>
<div class="a" style="left:295px;top:713px;width:1px;height:19px;background:#1c1c1c"></div>
<div class="a" style="left:296px;top:713px;width:1px;height:19px;background:#5c5c5c"></div>
<div class="t w r" style="left:722.111px;width:200px;top:717px;;letter-spacing:0.111px">8/30/2006</div>
<div class="a" style="left:928px;top:713px;width:1px;height:19px;background:#1c1c1c"></div>
<div class="a" style="left:929px;top:713px;width:1px;height:19px;background:#5c5c5c"></div>
<div class="t w r" style="left:755.141px;width:200px;top:717px;;letter-spacing:0.141px">8/06</div>
<div class="a" style="left:961px;top:713px;width:1px;height:19px;background:#1c1c1c"></div>
<div class="a" style="left:962px;top:713px;width:1px;height:19px;background:#5c5c5c"></div>
<div class="t w r" style="left:816.111px;width:200px;top:717px;;letter-spacing:0.111px">8/23/2007</div>
<div class="a" style="left:1021px;top:713px;width:1px;height:19px;background:#1c1c1c"></div>
<div class="a" style="left:1022px;top:713px;width:1px;height:19px;background:#5c5c5c"></div>
<div class="a" style="left:0px;top:734px;width:1024px;height:34px;background:linear-gradient(#2b62d6 0,#3d86f3 1px,#3a80f0 3px,#2c68e2 5px,#245cda 9px,#2560de 50%,#2662e2 82%,#2258d0 92%,#1c46b0 100%)"></div>
<div class="a" style="left:0px;top:738px;width:98px;height:30px;background:linear-gradient(#2b7d2c 0,#4fa54e 1px,#5db45b 3px,#46a245 6px,#3a983a 10px,#3b9a3b 60%,#2f8b31 85%,#256f28 100%);border-radius:0 12px 12px 0/0 15px 15px 0;box-shadow:inset -3px 0 4px -1px #1e6a22,inset 1px 0 0 #2a7a2c"></div>
<svg class="a" style="left:10px;top:743px" width="20" height="19" viewBox="0 0 20 19"><path d="M3 3.500C5.500 2 7.500 2 9.800 3.500L8.600 9C6.500 7.600 4.200 7.600 1.800 9Z" fill="#e8562c"/><path d="M11 4.200C13 5.500 15.500 5.500 18.500 3.800L17.300 9.300C14.500 10.800 12.200 10.800 9.800 9.600Z" fill="#7cc04c"/><path d="M1.500 10.300C4 9 6.300 9 8.300 10.300L7.200 15.800C5.200 14.500 2.800 14.500 0.300 15.800Z" fill="#4a8ce8"/><path d="M9.600 11C12 12.200 14.400 12.200 17 10.700L15.800 16.200C13.300 17.600 11 17.600 8.500 16.500Z" fill="#f4c430"/></svg>
<div class="t w" id="startt" style="left:34.500px;top:742px;font-size:18px;line-height:22px;height:22px;font-weight:bold;font-style:italic;text-shadow:1px 1px 1px #1c4c1c;transform:scaleX(0.97)">start</div>
<div class="a" style="left:106px;top:744px;width:2px;height:2px;background:#1a3f9e"></div>
<div class="a" style="left:107px;top:745px;width:1px;height:1px;background:#5a8cf0"></div>
<div class="a" style="left:109px;top:747px;width:2px;height:2px;background:#1a3f9e"></div>
<div class="a" style="left:110px;top:748px;width:1px;height:1px;background:#5a8cf0"></div>
<div class="a" style="left:106px;top:750px;width:2px;height:2px;background:#1a3f9e"></div>
<div class="a" style="left:107px;top:751px;width:1px;height:1px;background:#5a8cf0"></div>
<div class="a" style="left:109px;top:753px;width:2px;height:2px;background:#1a3f9e"></div>
<div class="a" style="left:110px;top:754px;width:1px;height:1px;background:#5a8cf0"></div>
<div class="a" style="left:106px;top:756px;width:2px;height:2px;background:#1a3f9e"></div>
<div class="a" style="left:107px;top:757px;width:1px;height:1px;background:#5a8cf0"></div>
<div class="a" style="left:109px;top:759px;width:2px;height:2px;background:#1a3f9e"></div>
<div class="a" style="left:110px;top:760px;width:1px;height:1px;background:#5a8cf0"></div>
<div class="a" style="left:106px;top:762px;width:2px;height:2px;background:#1a3f9e"></div>
<div class="a" style="left:107px;top:763px;width:1px;height:1px;background:#5a8cf0"></div>
<div class="a" style="left:365px;top:744px;width:2px;height:2px;background:#1a3f9e"></div>
<div class="a" style="left:366px;top:745px;width:1px;height:1px;background:#5a8cf0"></div>
<div class="a" style="left:368px;top:747px;width:2px;height:2px;background:#1a3f9e"></div>
<div class="a" style="left:369px;top:748px;width:1px;height:1px;background:#5a8cf0"></div>
<div class="a" style="left:365px;top:750px;width:2px;height:2px;background:#1a3f9e"></div>
<div class="a" style="left:366px;top:751px;width:1px;height:1px;background:#5a8cf0"></div>
<div class="a" style="left:368px;top:753px;width:2px;height:2px;background:#1a3f9e"></div>
<div class="a" style="left:369px;top:754px;width:1px;height:1px;background:#5a8cf0"></div>
<div class="a" style="left:365px;top:756px;width:2px;height:2px;background:#1a3f9e"></div>
<div class="a" style="left:366px;top:757px;width:1px;height:1px;background:#5a8cf0"></div>
<div class="a" style="left:368px;top:759px;width:2px;height:2px;background:#1a3f9e"></div>
<div class="a" style="left:369px;top:760px;width:1px;height:1px;background:#5a8cf0"></div>
<div class="a" style="left:365px;top:762px;width:2px;height:2px;background:#1a3f9e"></div>
<div class="a" style="left:366px;top:763px;width:1px;height:1px;background:#5a8cf0"></div>
<svg class="a" style="left:118px;top:743px" width="18" height="18" viewBox="0 0 18 18"><ellipse cx="9" cy="9" rx="8.6" ry="3.4" fill="none" stroke="#f0b020" stroke-width="1.6" transform="rotate(-32 9 9)"/><circle cx="9.4" cy="9.6" r="5.6" fill="none" stroke="#3aa0f0" stroke-width="3"/><rect x="6" y="8.4" width="9" height="2.2" fill="#3aa0f0"/><rect x="11" y="10.6" width="5" height="2.6" fill="#245cda"/></svg>
<svg class="a" style="left:141px;top:744px" width="18" height="17" viewBox="0 0 18 17"><rect x="3" y="1" width="12" height="14" rx="1" fill="#eaf2fc" stroke="#3a7ad8"/><circle cx="8.5" cy="8" r="4.4" fill="#3a8ae8"/><circle cx="8.5" cy="8" r="2.2" fill="#fff"/><path d="M12 3L16 6L12 8Z" fill="#e05020"/></svg>
<svg class="a" style="left:164px;top:743px" width="18" height="18" viewBox="0 0 18 18"><path d="M1 3.5L9 1L12 3.5L9 5L6.5 4.2L4 8Z" fill="#d8d8d8" stroke="#555" stroke-width="0.6"/><rect x="5" y="7" width="4" height="9" fill="#f0e020" stroke="#666" stroke-width="0.6"/><rect x="9.5" y="8" width="7" height="8" fill="#fff" stroke="#333" stroke-width="0.8"/><rect x="11" y="10" width="1.6" height="5" fill="#c02020"/><rect x="13.4" y="10" width="1.6" height="5" fill="#c02020"/></svg>
<svg class="a" style="left:187px;top:743px" width="18" height="18" viewBox="0 0 18 18"><rect x="1" y="1.5" width="13" height="10" fill="#d8d8d8" stroke="#222" stroke-width="1"/><rect x="2.5" y="3" width="5" height="3" fill="#222"/><circle cx="9.5" cy="9.5" r="5.2" fill="#9ee0e0" stroke="#1a6a8a" stroke-width="1.2"/><path d="M5 9.5H14M9.500 4.500V14.500M6 6.500C8 8 11 8 13 6.500M6 12.500C8 11 11 11 13 12.500" stroke="#1a8a6a" stroke-width="0.8" fill="none"/><path d="M13 13.500L16.500 17" stroke="#2a4ac0" stroke-width="1.8"/></svg>
<svg class="a" style="left:210px;top:743px" width="18" height="18" viewBox="0 0 18 18"><rect x="1.5" y="1.5" width="15" height="15" rx="1" fill="#a8a8a8" stroke="#6a6a6a"/><rect x="4" y="4" width="10" height="10" fill="#8c8c8c" stroke="#5a5a5a" stroke-width="0.8"/><rect x="5.500" y="5" width="4" height="6" fill="#e0a830"/><circle cx="11.500" cy="9.500" r="1.600" fill="#e03030"/></svg>
<svg class="a" style="left:233px;top:743px" width="20" height="18" viewBox="0 0 20 18"><rect x="8" y="4" width="10" height="8" fill="#9cc8f4" stroke="#e8f0fc" stroke-width="1.400"/><rect x="10" y="13" width="6" height="2.500" fill="#c8d4e4"/><circle cx="6" cy="5" r="3.200" fill="#e4e8f0"/><circle cx="5" cy="11" r="2.600" fill="#d0d8e8"/><path d="M6 5L12 8M5 11L11 9" stroke="#e8eef8" stroke-width="1"/></svg>
<svg class="a" style="left:257px;top:743px" width="18" height="18" viewBox="0 0 18 18"><path d="M1.500 1.500H11L16.500 4V16.500H1.500Z" fill="#e8ece8" stroke="#222" stroke-width="1.200"/><rect x="4" y="4" width="4" height="3" fill="#30a040"/><rect x="9.500" y="6" width="4" height="3" fill="#30a040"/><rect x="4" y="9.500" width="4" height="3" fill="#30a040"/><rect x="9.500" y="11.500" width="4" height="3" fill="#30a040"/></svg>
<svg class="a" style="left:280px;top:743px" width="20" height="18" viewBox="0 0 20 18"><path d="M1 2L6 7M3 1L8 6" stroke="#111" stroke-width="1.600"/><path d="M3 10L15 8L18 13L6 16Z" fill="#e8f4f4" stroke="#111" stroke-width="1"/><path d="M5 11.500L15 10" stroke="#20b0b0" stroke-width="2"/><rect x="14" y="2" width="3" height="3" fill="#e0d020"/><rect x="16" y="12" width="3" height="3" fill="#e02020"/></svg>
<svg class="a" style="left:304px;top:742px" width="20" height="20" viewBox="0 0 20 20"><rect x="1" y="3" width="13" height="13" fill="#f4f4f8" stroke="#8aa0c8"/><rect x="1" y="3" width="13" height="3" fill="#3a6ad8"/><rect x="11" y="0.500" width="8" height="8" fill="#fff" stroke="#444"/><text x="15" y="7.500" font-size="8" text-anchor="middle" font-family="Liberation Sans" fill="#000">8</text><path d="M5 15C7 12 9 12 10 15Z" fill="#e05020"/><path d="M9 16C11 13 14 13 16 17Z" fill="#40a040"/><path d="M6 18C8 15.500 10 15.500 12 18.500Z" fill="#f0c020"/></svg>
<svg class="a" style="left:326px;top:743px" width="18" height="18" viewBox="0 0 18 18"><rect x="1" y="1" width="14" height="15" rx="3" fill="#f4d8a0" stroke="#e09020" stroke-width="1.200"/><circle cx="10.500" cy="10.500" r="6" fill="#fbe8b0" stroke="#e8a020" stroke-width="1.400"/><path d="M7.500 9.500L10.500 12L13.500 8.500" fill="none" stroke="#c07010" stroke-width="1.300"/></svg>
<div class="a" style="left:376px;top:742px;width:81px;height:23px;background:linear-gradient(#5a98fa 0,#4288f4 3px,#3c80f0 60%,#3676e8 100%);border-radius:3px;box-shadow:inset 1px 1px 0 #6aa6fc,inset -1px -1px 0 #2a5ec8"></div>
<svg class="a" style="left:385px;top:745px" width="17" height="17" viewBox="0 0 17 17"><circle cx="8.500" cy="8.500" r="7.600" fill="#e8eef8" stroke="#f08020" stroke-width="1.400"/><path d="M1.500 11A7.500 7.500 0 0 0 15.500 11" fill="none" stroke="#40b040" stroke-width="1.400"/><circle cx="8.500" cy="8.500" r="5.200" fill="#2a5ad8"/><path d="M6.800 5.500L11.500 8.500L6.800 11.500Z" fill="#fff"/></svg>
<div class="t w" style="left:405px;top:747px;;letter-spacing:-0.613px">Wind…</div>
<div class="a" style="left:459px;top:742px;width:81px;height:23px;background:linear-gradient(#5a98fa 0,#4288f4 3px,#3c80f0 60%,#3676e8 100%);border-radius:3px;box-shadow:inset 1px 1px 0 #6aa6fc,inset -1px -1px 0 #2a5ec8"></div>
<svg class="a" style="left:468px;top:745px" width="18" height="18" viewBox="0 0 18 18"><rect x="1" y="1.5" width="13" height="10" fill="#d8d8d8" stroke="#222" stroke-width="1"/><rect x="2.5" y="3" width="5" height="3" fill="#222"/><circle cx="9.5" cy="9.5" r="5.2" fill="#9ee0e0" stroke="#1a6a8a" stroke-width="1.2"/><path d="M5 9.5H14M9.500 4.500V14.500M6 6.500C8 8 11 8 13 6.500M6 12.500C8 11 11 11 13 12.500" stroke="#1a8a6a" stroke-width="0.8" fill="none"/><path d="M13 13.500L16.500 17" stroke="#2a4ac0" stroke-width="1.8"/></svg>
<div class="t w" style="left:488px;top:747px;;letter-spacing:-0.938px">SQL …</div>
<div class="a" style="left:542px;top:742px;width:81px;height:23px;background:linear-gradient(#5a98fa 0,#4288f4 3px,#3c80f0 60%,#3676e8 100%);border-radius:3px;box-shadow:inset 1px 1px 0 #6aa6fc,inset -1px -1px 0 #2a5ec8"></div>
<svg class="a" style="left:551px;top:745px" width="18" height="16" viewBox="0 0 18 16"><path d="M1 7L5 2L9 6L5 11Z" fill="#f0a020"/><path d="M9 6L13 2L17 7L13 11Z" fill="#40b0e8"/><path d="M5 11L9 6L13 11L9 15Z" fill="#80c040"/><path d="M4 4L14 13" stroke="#e03020" stroke-width="2.200"/></svg>
<div class="t w" style="left:571px;top:747px;;letter-spacing:-1.219px">BBS….</div>
<div class="a" style="left:625px;top:742px;width:81px;height:23px;background:linear-gradient(#5a98fa 0,#4288f4 3px,#3c80f0 60%,#3676e8 100%);border-radius:3px;box-shadow:inset 1px 1px 0 #6aa6fc,inset -1px -1px 0 #2a5ec8"></div>
<svg class="a" style="left:635px;top:745px" width="13" height="16" viewBox="0 0 14 16" preserveAspectRatio="none"><path d="M3.5 1.2L5.5 2L7 0.8L8.5 2L10.3 1.4L8.6 4.6L5.4 4.6Z" fill="#c9a58c"/><rect x="5.6" y="4.5" width="2.8" height="1.6" fill="#d8a020"/><path d="M5.2 6C2.5 8 0.3 12 0.8 14.2C1 15.3 3 15.6 7 15.6C11 15.6 13 15.3 13.2 14.2C13.7 12 11.5 8 8.8 6Z" fill="#b98462"/><path d="M5.2 6C3.8 7 2.4 9 1.6 11C4 9 9 8.5 11.5 9.5C10.8 8 9.8 6.8 8.8 6Z" fill="#a8714f"/><text x="7" y="14" font-size="8" font-weight="bold" text-anchor="middle" fill="#f2c21a" font-family="Liberation Sans">$</text></svg>
<div class="t w" style="left:654px;top:747px;;letter-spacing:-0.422px">Facto…</div>
<div class="a" style="left:708px;top:742px;width:81px;height:23px;background:linear-gradient(#5a98fa 0,#4288f4 3px,#3c80f0 60%,#3676e8 100%);border-radius:3px;box-shadow:inset 1px 1px 0 #6aa6fc,inset -1px -1px 0 #2a5ec8"></div>
<svg class="a" style="left:716px;top:744px" width="18" height="18" viewBox="0 0 18 18"><ellipse cx="9" cy="9" rx="8.6" ry="3.4" fill="none" stroke="#f0b020" stroke-width="1.6" transform="rotate(-32 9 9)"/><circle cx="9.4" cy="9.6" r="5.6" fill="none" stroke="#3aa0f0" stroke-width="3"/><rect x="6" y="8.4" width="9" height="2.2" fill="#3aa0f0"/><rect x="11" y="10.6" width="5" height="2.6" fill="#245cda"/></svg>
<div class="t w" style="left:737px;top:747px;;letter-spacing:-0.208px">Strat…</div>
<div class="a" style="left:805px;top:738px;width:219px;height:30px;background:linear-gradient(#0f58b8 0,#1cb4f6 1px,#17a0f0 3px,#1290e8 7px,#1290e8 60%,#1494ea 85%,#0f78c8 100%);border-left:1px solid #0c4aa0;box-shadow:inset 1px 0 0 #1cb8f8"></div>
<svg class="a" style="left:816px;top:745px" width="17" height="17" viewBox="0 0 17 17"><rect x="5" y="0.500" width="7" height="3" fill="#f0d020"/><rect x="0.500" y="5" width="16" height="11" rx="1" fill="#101010"/><rect x="5" y="3.500" width="6" height="2" fill="#222"/><circle cx="8.500" cy="10.500" r="3.400" fill="#303030" stroke="#e8e8e8" stroke-width="1"/><rect x="2" y="8" width="1.5" height="6" fill="#d8d8d8"/><rect x="13.500" y="8" width="1.500" height="6" fill="#d8d8d8"/><rect x="12.500" y="8" width="1.200" height="1.200" fill="#e03030"/></svg>
<svg class="a" style="left:835px;top:745px" width="15" height="17" viewBox="0 0 15 17"><circle cx="7.500" cy="4.500" r="3.800" fill="#8cd060"/><path d="M0.500 16C0.500 10 3.500 8.500 7.500 8.500C11.500 8.500 14.500 10 14.500 16Z" fill="#78c04c"/></svg>
<svg class="a" style="left:852px;top:744px" width="17" height="18" viewBox="0 0 17 18"><path d="M3 2H10V5L13 5L8 9L3 5Z" fill="#30a030" transform="rotate(-60 8 5)"/><path d="M3 11L13 8L16 12L6 16Z" fill="#b8b8b8" stroke="#333" stroke-width="0.900"/></svg>
<svg class="a" style="left:869px;top:744px" width="18" height="18" viewBox="0 0 18 18"><rect x="1" y="1" width="14" height="15" rx="3" fill="#f4d8a0" stroke="#e09020" stroke-width="1.200"/><circle cx="10.500" cy="10.500" r="6" fill="#fbe8b0" stroke="#e8a020" stroke-width="1.400"/><path d="M7.500 9.500L10.500 12L13.500 8.500" fill="none" stroke="#c07010" stroke-width="1.300"/></svg>
<svg class="a" style="left:889px;top:747px" width="14" height="14"><rect width="7" height="7" fill="#888"/><rect x="7" width="7" height="7" fill="#000"/><rect y="7" width="7" height="7" fill="#000"/><rect x="7" y="7" width="7" height="7" fill="#999"/></svg>
<svg class="a" style="left:906px;top:745px" width="17" height="18" viewBox="0 0 17 18"><circle cx="6.500" cy="7" r="5.800" fill="#8a8a8a" stroke="#444" stroke-width="1"/><circle cx="6.500" cy="7" r="2.600" fill="#5a5a5a"/><path d="M9 15C11 14 13 12 14 10M11 16.500C13 15 15 13 16 11" stroke="#7a90e8" stroke-width="1" fill="none"/></svg>
<svg class="a" style="left:924px;top:744px" width="18" height="18" viewBox="0 0 18 18"><ellipse cx="10" cy="11" rx="6" ry="6.600" fill="#f8f8f8" stroke="#222" stroke-width="1.200"/><path d="M7 5C5 3 3 3 1.500 1.500" stroke="#222" stroke-width="1.400" fill="none"/><path d="M6.500 6L10 9" stroke="#888" stroke-width="1"/></svg>
<div class="a" style="left:942px;top:748px;width:16px;height:11px;background:#1020d0;border:1px solid #1020d0;color:#fff;font-size:7px;line-height:9px;font-weight:bold;text-align:center;font-style:italic">WD</div>
<div class="t w" id="clock" style="left:967px;top:747px;;letter-spacing:-0.286px">3:56 PM</div>
</body></html>
